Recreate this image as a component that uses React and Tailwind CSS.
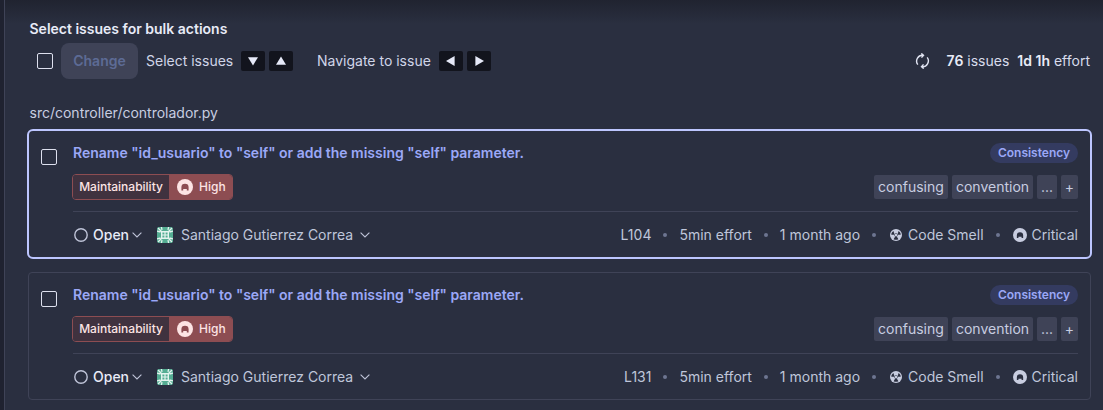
import React from "react";

function Checkbox() {
  return <span className="block size-4 shrink-0 rounded-[2px] border border-[#dde0ee]" />;
}

function Key({ d }) {
  return (
    <kbd className="flex h-5 w-6 items-center justify-center rounded-[2px] bg-[#12141d]">
      <svg width="12" height="12" viewBox="0 0 12 12" fill="#e6e9f8">
        <path d={d} />
      </svg>
    </kbd>
  );
}

function Chevron({ className }) {
  return (
    <svg className={className} width="10" height="6" viewBox="0 0 10 6" fill="none" stroke="#bfc4d8" strokeWidth="1.1">
      <path d="M.6.6 5 5 9.4.6" />
    </svg>
  );
}

function SeverityIcon({ size, fill, hole, className }) {
  return (
    <svg className={className} width={size} height={size} viewBox="0 0 16 16">
      <circle cx="8" cy="8" r="8" fill={fill} />
      <path d="M4.4 11.4V8.2a3.6 3.4 0 0 1 7.2 0v3.2H9.8V10H6.2v1.4Z" fill={hole} />
    </svg>
  );
}

function SmellIcon() {
  return (
    <svg className="ml-[2px] mr-[6px]" width="12" height="12" viewBox="0 0 12 12">
      <circle cx="6" cy="6" r="6" fill="#c8cde0" />
      <g fill="#2a2f40">
        <path d="M4.5 5.8H1.3C1.3 4.1 2.2 2.7 3.5 2Z" />
        <path d="M7.5 5.8h3.2c0-1.7-.9-3.1-2.2-3.8Z" />
        <path d="M5.2 7.6 3.6 10.2c1.5.8 3.3.8 4.8 0L6.8 7.6Z" />
        <circle cx="6" cy="6" r="1.7" />
      </g>
      <circle cx="6" cy="6" r="1.2" fill="#c8cde0" />
    </svg>
  );
}

function Avatar() {
  return (
    <svg className="ml-[15px] rounded-[2px]" width="16" height="16" viewBox="0 0 16 16">
      <path fill="#55ad93" d="M0 0h16v16H0z" />
      <path
        fill="none"
        stroke="#e4f4ef"
        strokeWidth="1.3"
        d="M1 1 4.5 4.5M15 1l-3.5 3.5M1 15l3.5-3.5M15 15l-3.5-3.5M0 4.2 3.5 5M16 4.2 12.5 5M0 11.8l3.5-.8M16 11.8l-3.5-.8M4.4 0 5 2.8M11.6 0 11 2.8M4.4 16l.6-2.8M11.6 16l-.6-2.8"
      />
      <path fill="#e4f4ef" d="M4 4h8v8H4z" />
      <path fill="#55ad93" d="M5.4 5.4h2v2h-2zM8.6 5.4h2v2h-2zM5.4 8.6h2v2h-2zM8.6 8.6h2v2h-2z" />
    </svg>
  );
}

function Dot() {
  return <span className="mx-3 size-1 rounded-full bg-[#6d7591]" />;
}

function Tag({ className, children }) {
  return (
    <span className={`flex h-6 items-center justify-center rounded-[2px] bg-[#3f4357] text-[#c8cde0] ${className}`}>
      {children}
    </span>
  );
}

function IssueCard({ line, selected }) {
  return (
    <article
      className={
        selected
          ? "-mx-px -mt-px -mb-px flex h-[130px] rounded-[6px] border-2 border-[#bdc6ff] px-3 pt-3"
          : "flex h-[128px] rounded-[4px] border border-[#3f4357] px-3 pt-3"
      }
    >
      <div className="w-8 shrink-0 pt-[6px]">
        <Checkbox />
      </div>
      <div className="min-w-0 flex-1">
        <div className="flex h-5 items-center justify-between">
          <a className="font-semibold text-[#9ba8f7]">Rename "id_usuario" to "self" or add the missing "self" parameter.</a>
          <span className="flex h-5 w-[88px] items-center justify-center rounded-full bg-[#343b60] text-xs font-semibold text-[#9ba8f7]">
            Consistency
          </span>
        </div>
        <div className="mt-[11px] flex h-[26px] items-center justify-between">
          <div className="-ml-px flex h-[26px] w-[161px] overflow-hidden rounded-[4px] border border-[#8d4d52] text-xs text-[#fde4e4]">
            <span className="flex w-[96px] items-center justify-center bg-[#40323f] font-medium">Maintainability</span>
            <span className="flex flex-1 items-center bg-[#8d4d52] font-medium">
              <SeverityIcon className="ml-2 mr-[6px]" size={16} fill="#fde4e4" hole="#8d4d52" />
              High
            </span>
          </div>
          <div className="flex gap-1">
            <Tag className="w-[74px]">confusing</Tag>
            <Tag className="w-[81px]">convention</Tag>
            <Tag className="w-5">...</Tag>
            <Tag className="w-[17px]">+</Tag>
          </div>
        </div>
        <div className="mt-[11px] border-t border-[#3f4357]" />
        <div className="mt-[13px] flex h-5 items-center justify-between text-[#bfc6da]">
          <div className="flex items-center">
            <svg className="ml-px mr-[5px]" width="14" height="14" viewBox="0 0 14 14" fill="none" stroke="#bfc4d8" strokeWidth="1.4">
              <circle cx="7" cy="7" r="6.2" />
            </svg>
            <span className="w-[36px] font-medium text-[#e8ebf7]">Open</span>
            <Chevron className="ml-[3px]" />
            <Avatar />
            <span className="ml-2">Santiago Gutierrez Correa</span>
            <Chevron className="ml-[7px]" />
          </div>
          <div className="flex items-center">
            <span>{line}</span>
            <Dot />
            <span>5min effort</span>
            <Dot />
            <span>1 month ago</span>
            <Dot />
            <SmellIcon />
            <span>Code Smell</span>
            <Dot />
            <SeverityIcon className="ml-px mr-[5px]" size={14} fill="#c8cde0" hole="#2a2f40" />
            <span>Critical</span>
          </div>
        </div>
      </div>
    </article>
  );
}

export default function App() {
  return (
    <div className="flex h-[410px] w-[1103px] overflow-hidden bg-[#2a2f40] font-['Inter','Liberation_Sans',sans-serif] text-sm leading-5">
      <div className="w-[5px] shrink-0 border-r border-[#3f4357] bg-[#1f2230]" />
      <main className="flex-1 bg-linear-to-b from-[#202330] from-0% to-[#2a2f40] to-[24px] pl-[23px] pr-3">
        <h2 className="mt-[19px] pl-[1.5px] font-semibold text-[#e8ebf7]">Select issues for bulk actions</h2>
        <div className="mt-1 flex h-9 items-center text-[#d0d5e8]">
          <span className="ml-[9px] mr-2">
            <Checkbox />
          </span>
          <button className="h-9 w-[77px] rounded-lg bg-[#3f4357] font-semibold text-[#5d6b95]">Change</button>
          <span className="ml-2 w-[95px]">Select issues</span>
          <div className="flex gap-1">
            <Key d="M1 2.2h10L6 10.4Z" />
            <Key d="M1 9.8h10L6 1.6Z" />
          </div>
          <span className="ml-6 w-[122px]">Navigate to issue</span>
          <div className="flex gap-1">
            <Key d="M9.6 1v10L1 6Z" />
            <Key d="M2.4 1v10L11 6Z" />
          </div>
          <div className="ml-auto mr-px flex items-center text-[#d8dcec]">
            <svg className="mr-4" width="16" height="16" viewBox="0 0 16 16" fill="none" stroke="#e1e4f2" strokeWidth="1.4">
              <path d="M2.8 11.6A5.8 5.8 0 0 1 8.3 2.4M6.3.4l2.2 2-2 2.2M12.2 4.4a5.8 5.8 0 0 1-5.5 9.2M8.7 15.6l-2.2-2 2-2.2" />
            </svg>
            <span><b className="font-semibold text-[#e8ebf7]">76</b> issues</span>
            <span className="ml-2"><b className="font-semibold text-[#e8ebf7]">1d 1h</b> effort</span>
          </div>
        </div>
        <div className="mt-6 mb-[7px] pl-[1.5px] text-[#c8cde0]">src/controller/controlador.py</div>
        <div className="flex flex-col gap-[14px]">
          <IssueCard line="L104" selected />
          <IssueCard line="L131" />
        </div>
      </main>
    </div>
  );
}
